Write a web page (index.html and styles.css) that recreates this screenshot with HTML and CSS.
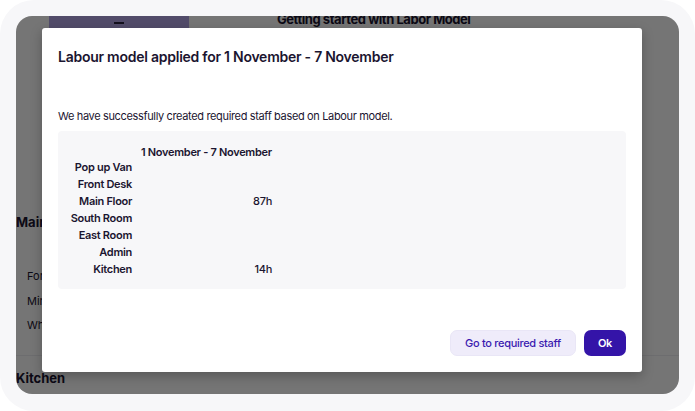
FILE: index.html
```html
<!DOCTYPE html>
<html lang="en">
<head>
    <meta charset="UTF-8">
    <title>Labour model applied</title>
    <link rel="stylesheet" href="styles.css">
</head>
<body>
    <!-- 바깥 프레임 -->
    <div class="device">
        <div class="screen">
            <!-- 뒤쪽 페이지 내용 -->
            <div class="page">
                <div class="page-top">
                    <button class="tab-btn"><span class="dash"></span></button>
                    <h2 class="page-title">Getting started with Labor Model</h2>
                </div>
                <section class="group">
                    <h3 class="group-name">Main</h3>
                    <ul class="group-list">
                        <li>Forecast</li>
                        <li>Minimum</li>
                        <li>When</li>
                    </ul>
                </section>
                <section class="group">
                    <h3 class="group-name">Kitchen</h3>
                </section>
            </div>

            <!-- 어두운 덮개 -->
            <div class="overlay"></div>

            <!-- 모달 -->
            <div class="modal">
                <h1 class="modal-title">Labour model applied for 1 November - 7 November</h1>
                <p class="modal-text">We have successfully created required staff based on Labour model.</p>
                <div class="summary">
                    <div class="grid">
                        <span class="head-row"></span><span class="head head-row">1 November - 7 November</span>
                        <span class="label">Pop up Van</span><span class="val"></span>
                        <span class="label">Front Desk</span><span class="val"></span>
                        <span class="label">Main Floor</span><span class="val">87h</span>
                        <span class="label">South Room</span><span class="val"></span>
                        <span class="label">East Room</span><span class="val"></span>
                        <span class="label">Admin</span><span class="val"></span>
                        <span class="label">Kitchen</span><span class="val">14h</span>
                    </div>
                </div>
                <div class="actions">
                    <button class="btn btn-light">Go to required staff</button>
                    <button class="btn btn-main">Ok</button>
                </div>
            </div>
        </div>
    </div>
</body>
</html>
```

FILE: styles.css
```css
html,body{
    margin: 0;padding: 0;
}
body{
    background-color: #fff;
    font-family: Inter, "Liberation Sans", sans-serif;
    color: #1b1530;
}
/* 바깥 프레임 */
.device{
    width: 695px; height: 411px;
    box-sizing: border-box;
    padding: 16px 16px 17px 16px;
    background-color: #f7f7f9;
    border-radius: 34px;
}
.screen{
    position: relative;
    height: 100%;
    background-color: #fff;
    border-radius: 16px;
    overflow: hidden;
}
/* 뒤쪽 페이지 */
.page-top{
    position: relative;
    height: 40px;
}
.tab-btn{
    position: absolute;
    left: 33px; top: -10px;
    width: 140px; height: 40px;
    border: none; border-radius: 8px;
    padding: 0;
    background-color: #b3a5e6;
}
.dash{
    display: block;
    width: 10px; height: 2px;
    margin: 0 auto;
    position: relative; top: -3px;
    background-color: #2a2440;
}
.page-title{
    margin: 0;
    position: absolute;
    left: 261px; top: -5px;
    font-size: 13px; font-weight: 700;
    letter-spacing: -0.45px;
}
.group{
    border-bottom: 1px solid #eeeef2;
}
.group-name{
    margin: 0;
    padding: 158px 0 18px 0;
    font-size: 13px; font-weight: 700;
}
.group + .group{
    border-bottom: none;
}
.group + .group .group-name{
    padding: 14px 0 10px 0;
}
.group-list{
    margin: 0; padding: 16px 0 17px 11px;
    list-style: none;
    font-size: 11px;
}
.group-list li{
    height: 24.5px; line-height: 24px;
}
/* 덮개 */
.overlay{
    position: absolute;
    top: 0; left: 0; right: 0; bottom: 0;
    background-color: rgba(0,0,0,.54);
}
/* 모달 */
.modal{
    position: absolute;
    left: 26px; top: 12px;
    width: 600px; height: 344px;
    box-sizing: border-box;
    padding: 20px 16px 16px 16px;
    background-color: #fff;
    border-radius: 3px;
    box-shadow: 0 4px 12px rgba(0,0,0,.25);
    display: flex; flex-direction: column;
}
.modal-title{
    margin: 0;
    font-size: 14px; font-weight: 600;
    letter-spacing: -0.25px;
    line-height: 18px;
}
.modal-text{
    margin: 43px 0 8px 0;
    font-size: 11px;
    letter-spacing: -0.35px;
    line-height: 14px;
}
.summary{
    height: 158px;
    box-sizing: border-box;
    padding: 14px 0 0 0;
    background-color: #f7f7f9;
    border-radius: 4px;
}
.grid{
    display: grid;
    grid-template-columns: 74px 140px;
    column-gap: 9px;
    font-size: 11px;
    letter-spacing: -0.3px;
    line-height: 17px;
}
.head-row{
    line-height: 14px;
}
.head{
    font-weight: 600;
}
.label{
    text-align: right;
    font-weight: 600;
}
.val{
    text-align: right;
    padding-right: 9px;
    font-weight: 500;
}
.actions{
    margin-top: auto;
    display: flex; justify-content: flex-end;
    gap: 8px;
}
.btn{
    height: 26px;
    padding: 0 14px;
    border: none; border-radius: 7px;
    font-family: inherit;
    font-size: 11px; font-weight: 500;
    letter-spacing: -0.3px;
    cursor: pointer;
}
.btn-light{
    background-color: #efecfa;
    color: #3b1bb0;
    border: 1px solid #e9e6f6;
}
.btn-main{
    background-color: #3414a8;
    color: #fff;
    font-weight: 600;
}
```
